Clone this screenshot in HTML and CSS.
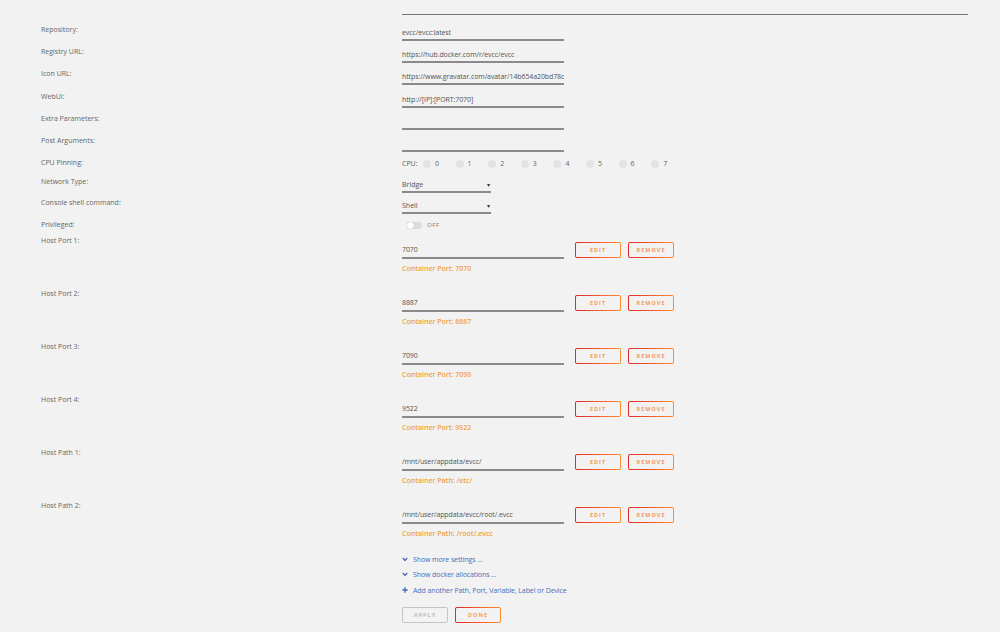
FILE: index.html
```html
<!DOCTYPE html>
<html lang="en">
<head>
    <title>Update Container</title>
    <link rel="stylesheet" href="styles.css">
</head>
<body>
    <div class="form">
        <div class="top-line"></div>

        <div class="row">
            <span class="label">Repository:</span>
            <div class="value"><input class="field" type="text" value="evcc/evcc:latest" readonly></div>
        </div>
        <div class="row">
            <span class="label">Registry URL:</span>
            <div class="value"><input class="field" type="text" value="https://hub.docker.com/r/evcc/evcc" readonly></div>
        </div>
        <div class="row">
            <span class="label">Icon URL:</span>
            <div class="value"><input class="field" type="text" value="https://www.gravatar.com/avatar/14b654a20bd78c5d4d4d6e7e4f0a4b1a" readonly></div>
        </div>
        <div class="row">
            <span class="label">WebUI:</span>
            <div class="value"><input class="field" type="text" value="http://[IP]:[PORT:7070]" readonly></div>
        </div>
        <div class="row">
            <span class="label">Extra Parameters:</span>
            <div class="value"><input class="field" type="text" value="" readonly></div>
        </div>
        <div class="row">
            <span class="label">Post Arguments:</span>
            <div class="value"><input class="field" type="text" value="" readonly></div>
        </div>

        <div class="row row-cpu">
            <span class="label">CPU Pinning:</span>
            <div class="value cpu-list">
                <span class="cpu-title">CPU:</span>
                <span class="cpu"><i></i>0</span>
                <span class="cpu"><i></i>1</span>
                <span class="cpu"><i></i>2</span>
                <span class="cpu"><i></i>3</span>
                <span class="cpu"><i></i>4</span>
                <span class="cpu"><i></i>5</span>
                <span class="cpu"><i></i>6</span>
                <span class="cpu"><i></i>7</span>
            </div>
        </div>
        <div class="row row-select">
            <span class="label">Network Type:</span>
            <div class="value"><div class="select">Bridge<span class="caret">&#9662;</span></div></div>
        </div>
        <div class="row row-select2">
            <span class="label">Console shell command:</span>
            <div class="value"><div class="select">Shell<span class="caret">&#9662;</span></div></div>
        </div>
        <div class="row row-switch">
            <span class="label">Privileged:</span>
            <div class="value switch-wrap"><span class="switch"><i></i></span><span class="switch-text">OFF</span></div>
        </div>

        <div class="row block">
            <span class="label">Host Port 1:</span>
            <div class="value">
                <div class="block-line">
                    <input class="field" type="text" value="7070" readonly>
                    <button class="btn">EDIT</button>
                    <button class="btn">REMOVE</button>
                </div>
                <div class="hint">Container Port: 7070</div>
            </div>
        </div>
        <div class="row block">
            <span class="label">Host Port 2:</span>
            <div class="value">
                <div class="block-line">
                    <input class="field" type="text" value="8887" readonly>
                    <button class="btn">EDIT</button>
                    <button class="btn">REMOVE</button>
                </div>
                <div class="hint">Container Port: 8887</div>
            </div>
        </div>
        <div class="row block">
            <span class="label">Host Port 3:</span>
            <div class="value">
                <div class="block-line">
                    <input class="field" type="text" value="7090" readonly>
                    <button class="btn">EDIT</button>
                    <button class="btn">REMOVE</button>
                </div>
                <div class="hint">Container Port: 7090</div>
            </div>
        </div>
        <div class="row block">
            <span class="label">Host Port 4:</span>
            <div class="value">
                <div class="block-line">
                    <input class="field" type="text" value="9522" readonly>
                    <button class="btn">EDIT</button>
                    <button class="btn">REMOVE</button>
                </div>
                <div class="hint">Container Port: 9522</div>
            </div>
        </div>
        <div class="row block">
            <span class="label">Host Path 1:</span>
            <div class="value">
                <div class="block-line">
                    <input class="field" type="text" value="/mnt/user/appdata/evcc/" readonly>
                    <button class="btn">EDIT</button>
                    <button class="btn">REMOVE</button>
                </div>
                <div class="hint">Container Path: /etc/</div>
            </div>
        </div>
        <div class="row block">
            <span class="label">Host Path 2:</span>
            <div class="value">
                <div class="block-line">
                    <input class="field" type="text" value="/mnt/user/appdata/evcc/root/.evcc" readonly>
                    <button class="btn">EDIT</button>
                    <button class="btn">REMOVE</button>
                </div>
                <div class="hint">Container Path: /root/.evcc</div>
            </div>
        </div>

        <div class="links">
            <a href="#" class="link">
                <svg width="6" height="5" viewBox="0 0 6 5"><path d="M0.8 1 L3 3.4 L5.2 1" fill="none" stroke="#486dba" stroke-width="1.4"/></svg>
                Show more settings ...
            </a>
            <a href="#" class="link">
                <svg width="6" height="5" viewBox="0 0 6 5"><path d="M0.8 1 L3 3.4 L5.2 1" fill="none" stroke="#486dba" stroke-width="1.4"/></svg>
                Show docker allocations ...
            </a>
            <a href="#" class="link">
                <svg width="6" height="6" viewBox="0 0 6 6"><path d="M3 0.3 V5.7 M0.3 3 H5.7" fill="none" stroke="#486dba" stroke-width="1.4"/></svg>
                Add another Path, Port, Variable, Label or Device
            </a>
        </div>

        <div class="actions">
            <button class="btn btn-disabled">APPLY</button>
            <button class="btn">DONE</button>
        </div>
    </div>
</body>
</html>
```

FILE: styles.css
```css
* {
    margin: 0;
    padding: 0;
    box-sizing: border-box;
}
body {
    font-family: "Open Sans", Arial, sans-serif;
    background: #f2f2f2;
    color: #606060;
    font-size: 7px;
}
.form {
    padding-top: 14px;
    width: 1000px;
}
.top-line {
    margin-left: 402px;
    width: 566px;
    height: 1px;
    background: #777;
    margin-bottom: 10px;
}
.row {
    display: grid;
    grid-template-columns: 402px 1fr;
    height: 22.2px;
}
.label {
    padding-left: 41px;
    line-height: 10px;
    color: #666;
}
.value {
    padding-top: 1px;
}
.field {
    display: block;
    width: 162px;
    height: 15px;
    border: none;
    border-bottom: 2px solid #8a8a8a;
    background: transparent;
    font-family: inherit;
    font-size: 7px;
    letter-spacing: -0.1px;
    color: #555;
    outline: none;
}

/* cpu pinning */
.row-cpu {
    height: 19px;
}
.cpu-list {
    display: flex;
    align-items: center;
    height: 11px;
    line-height: 10px;
}
.cpu-title {
    width: 21px;
}
.cpu {
    display: flex;
    align-items: center;
    width: 32.6px;
    color: #666;
}
.cpu i {
    display: block;
    width: 8px;
    height: 8px;
    border-radius: 50%;
    background: #e3e3e3;
    margin-right: 4px;
}

/* selects */
.row-select {
    height: 21px;
}
.row-select2 {
    height: 22px;
}
.select {
    display: flex;
    justify-content: space-between;
    align-items: center;
    width: 89px;
    height: 15px;
    border-bottom: 2px solid #8a8a8a;
    color: #555;
}
.caret {
    font-size: 6px;
    color: #333;
    padding-right: 1px;
}

/* switch */
.row-switch {
    height: 16px;
}
.switch-wrap {
    display: flex;
    align-items: center;
    height: 9px;
    padding-left: 5px;
}
.switch {
    display: block;
    width: 15px;
    height: 7px;
    border-radius: 4px;
    background: #dcdcdc;
    position: relative;
    margin-right: 5px;
}
.switch i {
    position: absolute;
    left: 0;
    top: 0;
    width: 7px;
    height: 7px;
    border-radius: 50%;
    background: #fff;
    box-shadow: 0 0 1px rgba(0, 0, 0, 0.4);
}
.switch-text {
    font-size: 6px;
    letter-spacing: 0.6px;
    color: #777;
}

/* host port and path blocks */
.block {
    height: 53px;
}
.block .value {
    padding-top: 6px;
}
.block-line {
    display: flex;
    align-items: flex-start;
    gap: 7px;
}
.block-line .field {
    height: 17px;
    margin-right: 4px;
}
.hint {
    margin-top: 5px;
    line-height: 10px;
    color: #eea43e;
    font-weight: 600;
}
.btn {
    width: 46px;
    height: 16px;
    border: 1px solid transparent;
    border-radius: 2px;
    background: linear-gradient(#f2f2f2, #f2f2f2) padding-box,
                linear-gradient(90deg, #e22828, #ff8c2f) border-box;
    font-family: inherit;
    font-size: 5.5px;
    font-weight: 700;
    letter-spacing: 1px;
    color: #f59a5a;
    cursor: pointer;
}
.btn-disabled {
    background: #f2f2f2;
    border: 1px solid #c4c4c4;
    color: #bdbdbd;
}

/* links */
.links {
    padding-left: 402px;
}
.link {
    display: flex;
    align-items: center;
    gap: 5px;
    height: 10px;
    margin-bottom: 5.5px;
    color: #486dba;
    text-decoration: none;
    letter-spacing: -0.1px;
}
.actions {
    display: flex;
    gap: 7px;
    padding-left: 402px;
    margin-top: 12px;
}
```
